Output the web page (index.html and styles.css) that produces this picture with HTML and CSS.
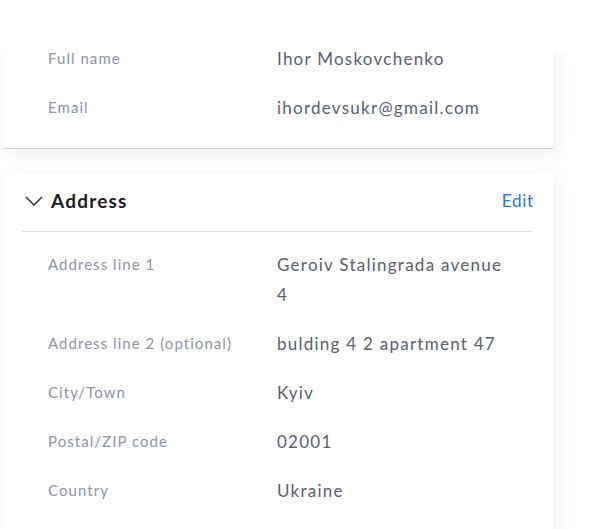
FILE: index.html
```html
<!DOCTYPE html>
<html>
<head>
<meta charset="utf-8">
<link rel="stylesheet" href="styles.css">
</head>
<body>
<div class="page">
  <div class="topbar"></div>
  <section class="card card-personal">
    <div class="rows">
      <div class="row"><div class="label">Full name</div><div class="value">Ihor Moskovchenko</div></div>
      <div class="row"><div class="label">Email</div><div class="value">ihordevsukr@gmail.com</div></div>
    </div>
  </section>
  <section class="card card-address">
    <div class="card-head">
      <div class="title">
        <svg class="chevron" width="18" height="10" viewBox="0 0 18 10"><path d="M1 1 L9 9 L17 1" fill="none" stroke="#222" stroke-width="1.3"/></svg>
        <h2>Address</h2>
      </div>
      <a class="edit">Edit</a>
    </div>
    <div class="rows">
      <div class="row"><div class="label">Address line 1</div><div class="value">Geroiv Stalingrada avenue 4</div></div>
      <div class="row"><div class="label">Address line 2 (optional)</div><div class="value">bulding 4 2 apartment 47</div></div>
      <div class="row"><div class="label">City/Town</div><div class="value">Kyiv</div></div>
      <div class="row"><div class="label">Postal/ZIP code</div><div class="value">02001</div></div>
      <div class="row"><div class="label">Country</div><div class="value">Ukraine</div></div>
    </div>
  </section>
</div>
</body>
</html>
```
FILE: styles.css
```css
* { box-sizing: border-box; }
html, body { margin: 0; padding: 0; background: #fff; }
body { font-family: Lato, "Open Sans", sans-serif; overflow: hidden; }
.page { width: 601px; height: 529px; overflow: hidden; position: relative; }
.topbar { height: 52px; background: #fff; position: relative; z-index: 2; }
.card {
  margin-left: 3px;
  width: 550px;
  background: #fff;
  box-shadow: 4px 4px 18px rgba(0,0,0,0.07);
  padding: 0 20px 0 19px;
}
.card-personal {
  border-bottom: 1px solid #cfd0d9;
  padding-bottom: 16px;
}
.card-address { margin-top: 24px; padding-bottom: 40px; }
.card-head {
  height: 59px;
  padding-bottom: 4px;
  display: flex;
  align-items: center;
  justify-content: space-between;
  border-bottom: 1px solid #e1e1e4;
}
.title { display: flex; align-items: center; gap: 8px; }
.chevron { margin-left: 3px; margin-top: 1px; }
h2 { margin: 0; font-size: 19px; font-weight: 700; color: #1c1c1e; letter-spacing: 1.2px; }
.edit { font-size: 17px; color: #1a7fd6; letter-spacing: 0.8px; margin-right: -1px; }
.card-address .rows { padding-top: 8px; }
.row {
  display: grid;
  grid-template-columns: 229px 234px;
  padding: 9px 0 10px 26px;
}
.label { font-size: 15px; line-height: 30px; color: #8b93a5; letter-spacing: 1.05px; }
.value { font-size: 17px; line-height: 30px; color: #5a606e; letter-spacing: 1.25px; padding-top: 1px; margin-bottom: -1px; }
.card-personal .row:first-child { padding-top: 0; margin-top: -9px; }
```
